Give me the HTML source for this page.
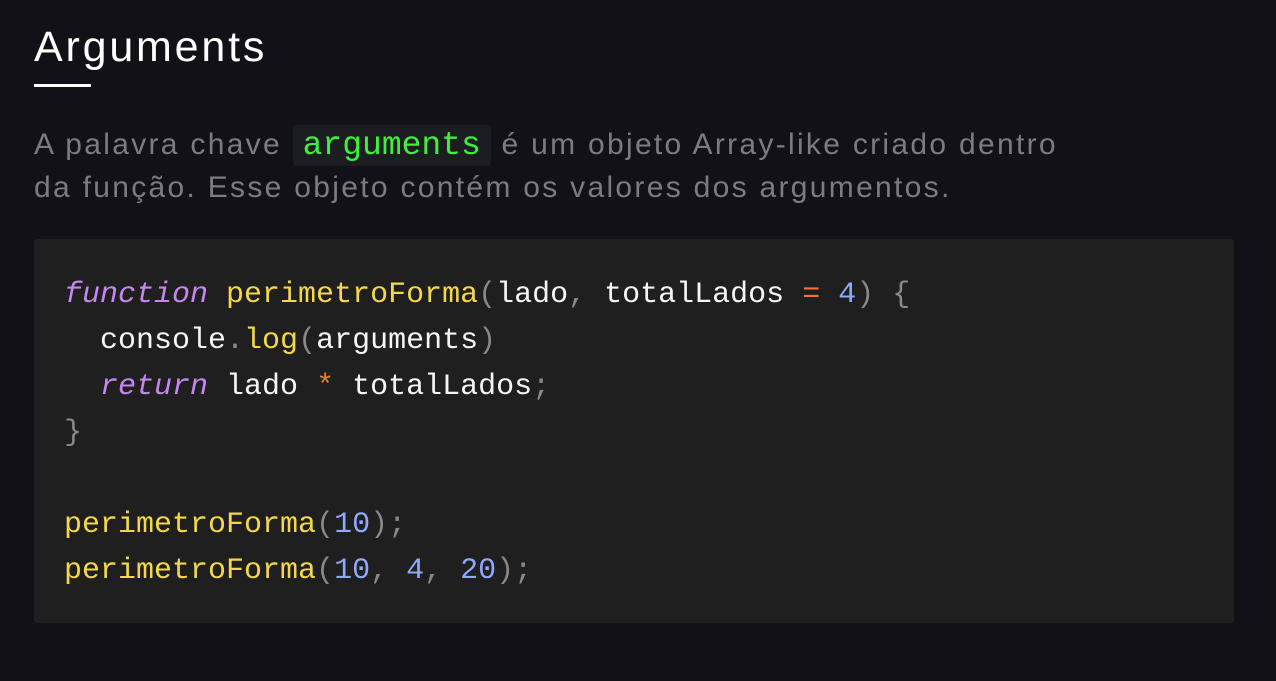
<!DOCTYPE html>
<html><head><style>
body{margin:0;width:1276px;height:681px;background:#111117;overflow:hidden;font-family:"Liberation Sans",sans-serif}
h1{position:absolute;left:34px;top:21px;margin:0;font-weight:normal;font-size:43px;letter-spacing:2.8px;color:#fff;line-height:52px}
.ul{position:absolute;left:34px;top:84px;width:57px;height:3px;background:#fff}
p{position:absolute;left:34px;top:124px;margin:0;width:1100px;font-size:30px;letter-spacing:2.3px;line-height:42px;color:#7b7b80;white-space:nowrap}
code.i{font-family:"Liberation Mono",monospace;font-size:33px;letter-spacing:0;color:#3ef03e;background:#1c1d21;padding:2px 10px;border-radius:4px}
.blk{position:absolute;left:34px;top:239px;width:1200px;height:384px;background:#1f1f1f;border-radius:3px}
pre{position:absolute;left:64px;top:272px;margin:0;font-family:"Liberation Mono",monospace;font-size:30px;line-height:46px;color:#f5f5f5}
.k{color:#c586f0;font-style:italic}.f{color:#f4d74a}.n{color:#8fa9ff}.o{color:#f5743a}.p{color:#888}
</style></head><body>
<h1>Arguments</h1><div class="ul"></div>
<p>A palavra chave <code class="i">arguments</code> é um objeto Array-like criado dentro<br>da função. Esse objeto contém os valores dos argumentos.</p>
<div class="blk"></div>
<pre><span class="k">function</span> <span class="f">perimetroForma</span><span class="p">(</span>lado<span class="p">,</span> totalLados <span class="o">=</span> <span class="n">4</span><span class="p">)</span> <span class="p">{</span>
  console<span class="p">.</span><span class="f">log</span><span class="p">(</span>arguments<span class="p">)</span>
  <span class="k">return</span> lado <span class="o">*</span> totalLados<span class="p">;</span>
<span class="p">}</span>

<span class="f">perimetroForma</span><span class="p">(</span><span class="n">10</span><span class="p">);</span>
<span class="f">perimetroForma</span><span class="p">(</span><span class="n">10</span><span class="p">,</span> <span class="n">4</span><span class="p">,</span> <span class="n">20</span><span class="p">);</span></pre>
</body></html>
